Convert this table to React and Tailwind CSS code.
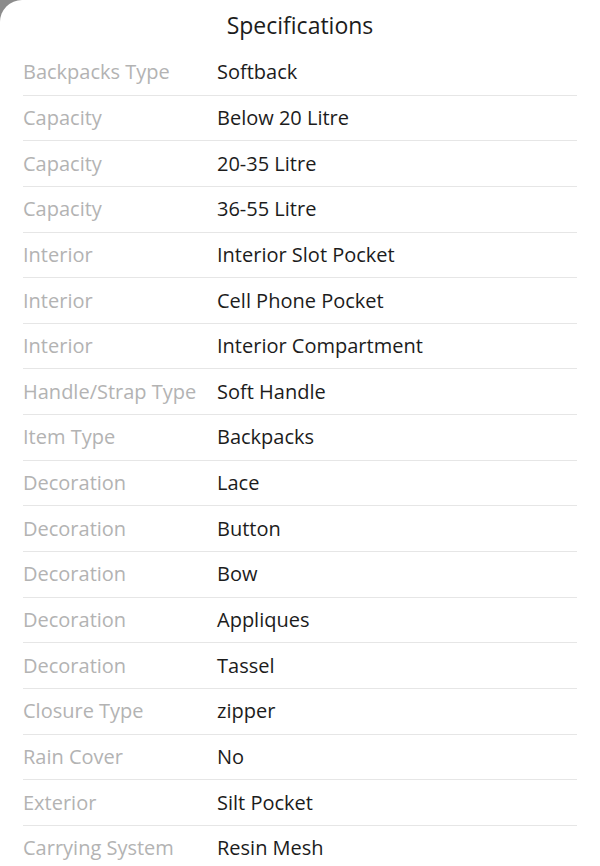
const SPECS = [
  ['Backpacks Type', 'Softback'],
  ['Capacity', 'Below 20 Litre'],
  ['Capacity', '20-35 Litre'],
  ['Capacity', '36-55 Litre'],
  ['Interior', 'Interior Slot Pocket'],
  ['Interior', 'Cell Phone Pocket'],
  ['Interior', 'Interior Compartment'],
  ['Handle/Strap Type', 'Soft Handle'],
  ['Item Type', 'Backpacks'],
  ['Decoration', 'Lace'],
  ['Decoration', 'Button'],
  ['Decoration', 'Bow'],
  ['Decoration', 'Appliques'],
  ['Decoration', 'Tassel'],
  ['Closure Type', 'zipper'],
  ['Rain Cover', 'No'],
  ['Exterior', 'Silt Pocket'],
  ['Carrying System', 'Resin Mesh'],
];

export default function App() {
  return (
    <div className="h-[866px] w-[600px] overflow-hidden bg-[#8c8c8c] font-['Open_Sans',sans-serif]">
      <div className="h-full rounded-tl-[22px] bg-white">
        <div className="flex h-[50px] items-center justify-center text-[23px] text-[#1c1c1c]">
          Specifications
        </div>
        <div className="px-[23px]">
          {SPECS.map(([label, value], i) => (
            <div
              key={i}
              className="flex h-[45.65px] items-center border-b border-[#e6e6e6] text-[20px]"
            >
              <span className="w-[194px] shrink-0 text-[#b3b3b3]">{label}</span>
              <span className="text-[#1c1c1c]">{value}</span>
            </div>
          ))}
        </div>
      </div>
    </div>
  );
}
